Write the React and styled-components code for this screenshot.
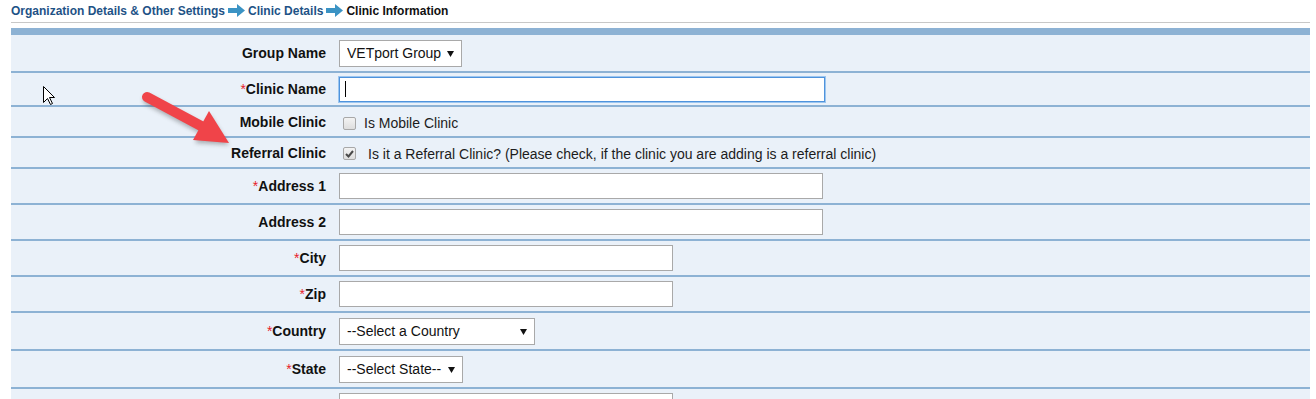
import React from "react";
import styled, { createGlobalStyle } from "styled-components";

const Global = createGlobalStyle`
  *, *::before, *::after { box-sizing: border-box; }
  html, body { margin: 0; padding: 0; background: #fff; }
  body { font-family: "Liberation Sans", Arial, sans-serif; }
`;

const Page = styled.div`
  position: relative;
  padding: 0 6px 0 11px;
`;

const Breadcrumb = styled.div`
  display: flex;
  align-items: center;
  gap: 3px;
  height: 23px;
  padding-bottom: 1px;
  border-bottom: 1px solid #c8c8c8;
  font-size: 12px;
  font-weight: bold;
  color: #1e5286;
`;

const Crumb = styled.span`
  color: ${(p) => (p.$current ? "#111" : "#1e5286")};
  white-space: nowrap;
`;

const HeaderBar = styled.div`
  margin-top: 5px;
  height: 7px;
  background: #8db2d4;
`;

const Panel = styled.div`
  background: #eaf1f9;
`;

const Row = styled.div`
  display: grid;
  grid-template-columns: 324px 1fr;
  align-items: center;
  height: ${(p) => p.$h}px;
  border-bottom: 2px solid #8db2d4;
`;

const Label = styled.div`
  text-align: right;
  padding-right: 9px;
  font-size: 14px;
  font-weight: bold;
  color: #111;
  white-space: nowrap;
`;

const Req = styled.span`
  color: #e8202a;
  font-weight: normal;
`;

const Value = styled.div`
  display: flex;
  align-items: center;
  padding-left: 4px;
  padding-top: ${(p) => p.$pt || 0}px;
`;

const FieldWrap = styled.div`
  position: relative;
  display: inline-block;
`;

const TextInput = styled.input`
  display: block;
  width: ${(p) => p.$w}px;
  height: ${(p) => p.$h || 26}px;
  margin: 0;
  padding: 0 6px;
  background: #fff;
  border: 1px solid ${(p) => (p.$focus ? "#4f93dc" : "#a9a9a9")};
  box-shadow: ${(p) => (p.$focus ? "0 0 0 1px #9cc6f0" : "none")};
  outline: none;
  font-family: inherit;
  font-size: 14px;
`;

const Caret = styled.span`
  position: absolute;
  left: 6px;
  top: 4px;
  width: 1px;
  height: 16px;
  background: #000;
`;

const Select = styled.select`
  appearance: none;
  -webkit-appearance: none;
  display: block;
  width: ${(p) => p.$w}px;
  height: 27px;
  margin: 0;
  padding: 0 20px 0 7px;
  background: #fff;
  border: 1px solid #a9a9a9;
  border-radius: 0;
  font-family: inherit;
  font-size: 14px;
  color: #111;
  outline: none;
`;

const SelectArrow = styled.svg`
  position: absolute;
  right: 8px;
  top: 11px;
  pointer-events: none;
`;

const CheckBox = styled.span`
  display: inline-flex;
  align-items: center;
  justify-content: center;
  width: 13px;
  height: 13px;
  margin: 0 ${(p) => p.$gap}px 0 4px;
  border: 1px solid #a8a8a8;
  border-radius: 2px;
  background: linear-gradient(#f3f3f3, #dedede);
  flex-shrink: 0;
`;

const CheckText = styled.span`
  font-size: 14px;
  color: #1c1c1c;
  white-space: nowrap;
`;

const Overlay = styled.svg`
  position: absolute;
  left: 0;
  top: 0;
  pointer-events: none;
  overflow: visible;
`;

function CrumbArrow() {
  return (
    <svg width="17" height="13" viewBox="0 0 17 13">
      <path d="M0 4 H9 V0 L17 6.5 L9 13 V9 H0 Z" fill="#3b93c4" />
    </svg>
  );
}

function Dropdown({ w, children }) {
  return (
    <FieldWrap>
      <Select $w={w} defaultValue="a">
        <option value="a">{children}</option>
      </Select>
      <SelectArrow width="7" height="6" viewBox="0 0 7 6">
        <path d="M0 0 H7 L3.5 6 Z" fill="#111" />
      </SelectArrow>
    </FieldWrap>
  );
}

function Field({ label, required, h, children, pt }) {
  return (
    <Row $h={h}>
      <Label>
        {required && <Req>*</Req>}
        {label}
      </Label>
      <Value $pt={pt}>{children}</Value>
    </Row>
  );
}

export default function App() {
  return (
    <>
      <Global />
      <Page>
        <Breadcrumb>
          <Crumb>Organization Details &amp; Other Settings</Crumb>
          <CrumbArrow />
          <Crumb>Clinic Details</Crumb>
          <CrumbArrow />
          <Crumb $current>Clinic Information</Crumb>
        </Breadcrumb>
        <HeaderBar />
        <Panel>
          <Field label="Group Name" h={38}>
            <Dropdown w={123}>VETport Group</Dropdown>
          </Field>
          <Field label="Clinic Name" required h={34}>
            <FieldWrap>
              <TextInput $w={486} $h={25} $focus readOnly value="" />
              <Caret />
            </FieldWrap>
          </Field>
          <Field label="Mobile Clinic" h={31} pt={3}>
            <CheckBox $gap={8} />
            <CheckText>Is Mobile Clinic</CheckText>
          </Field>
          <Field label="Referral Clinic" h={31} pt={2}>
            <CheckBox $gap={12}>
              <svg width="9" height="8" viewBox="0 0 9 8">
                <path d="M1 4 L3.5 6.5 L8 1" fill="none" stroke="#4a4a4a" strokeWidth="2" />
              </svg>
            </CheckBox>
            <CheckText>
              Is it a Referral Clinic? (Please check, if the clinic you are adding is a referral clinic)
            </CheckText>
          </Field>
          <Field label="Address 1" required h={36}>
            <TextInput $w={484} readOnly value="" />
          </Field>
          <Field label="Address 2" h={36}>
            <TextInput $w={484} readOnly value="" />
          </Field>
          <Field label="City" required h={36}>
            <TextInput $w={334} readOnly value="" />
          </Field>
          <Field label="Zip" required h={36}>
            <TextInput $w={334} readOnly value="" />
          </Field>
          <Field label="Country" required h={38}>
            <Dropdown w={196}>--Select a Country</Dropdown>
          </Field>
          <Field label="State" required h={38}>
            <Dropdown w={124}>--Select State--</Dropdown>
          </Field>
          <Field label="" h={36}>
            <TextInput $w={334} readOnly value="" />
          </Field>
        </Panel>
        <Overlay width="1316" height="399" viewBox="0 0 1316 399">
          <defs>
            <filter id="sh" x="-20%" y="-20%" width="140%" height="140%">
              <feGaussianBlur stdDeviation="2" />
            </filter>
          </defs>
          <g transform="translate(1 3)" filter="url(#sh)" opacity="0.35">
            <line x1="147" y1="97" x2="203" y2="127" stroke="#333" strokeWidth="10" strokeLinecap="round" />
            <path d="M209 112 L194 140 L228 142 Z" fill="#333" />
          </g>
          <line x1="147" y1="97" x2="203" y2="127" stroke="#f04449" strokeWidth="10" strokeLinecap="round" />
          <path d="M209 111 L193 140 L229 143 Z" fill="#f04449" />
          <path
            d="M43.5 86.5 L43.5 102.5 L47.5 98.5 L50.5 104.5 L52.5 103.5 L49.5 97.5 L54.5 97.5 Z"
            fill="#fff"
            stroke="#000"
            strokeWidth="1"
          />
        </Overlay>
      </Page>
    </>
  );
}
